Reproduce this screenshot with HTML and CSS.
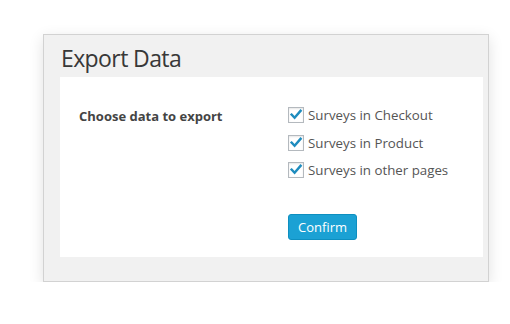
FILE: index.html
```html
<!DOCTYPE html>
<html>
<head>
<meta charset="utf-8">
<link rel="stylesheet" href="styles.css">
</head>
<body>
<div class="panel">
  <h1 class="title">Export Data</h1>
  <div class="card">
    <div class="label">Choose data to export</div>
    <div class="options">
      <div class="option"><span class="box"><svg viewBox="0 0 16 16" width="16" height="16"><path d="M3.6 7.6 L6.6 10.8 L12.6 3.8" fill="none" stroke="#1e8cbe" stroke-width="2.4" stroke-linecap="square"/></svg></span><span>Surveys in Checkout</span></div>
      <div class="option"><span class="box"><svg viewBox="0 0 16 16" width="16" height="16"><path d="M3.6 7.6 L6.6 10.8 L12.6 3.8" fill="none" stroke="#1e8cbe" stroke-width="2.4" stroke-linecap="square"/></svg></span><span>Surveys in Product</span></div>
      <div class="option"><span class="box"><svg viewBox="0 0 16 16" width="16" height="16"><path d="M3.6 7.6 L6.6 10.8 L12.6 3.8" fill="none" stroke="#1e8cbe" stroke-width="2.4" stroke-linecap="square"/></svg></span><span>Surveys in other pages</span></div>
      <button class="confirm">Confirm</button>
    </div>
  </div>
</div>
</body>
</html>
```
FILE: styles.css
```css
html, body {
  margin: 0;
  padding: 0;
  background: #ffffff;
}
body {
  font-family: "Open Sans", "Liberation Sans", sans-serif;
  padding: 34px 0 0 43px;
}
.panel {
  width: 444px;
  border: 1px solid #d2d2d2;
  background: #f1f1f1;
  box-shadow: 0 4px 14px rgba(0, 0, 0, 0.12);
  padding-bottom: 24px;
}
.title {
  margin: 0;
  padding: 7px 0 3px 17px;
  font-size: 23px;
  letter-spacing: -0.6px;
  line-height: 32px;
  font-weight: 400;
  color: #383838;
}
.card {
  margin: 0 5px 0 16px;
  background: #ffffff;
  display: flex;
  padding: 28px 0 17px 19px;
  height: 135px;
}
.label {
  width: 209px;
  font-size: 13px;
  font-weight: 700;
  color: #444444;
  line-height: 20px;
  margin-top: 1px;
}
.options {
  display: flex;
  flex-direction: column;
  align-items: flex-start;
  gap: 7.5px;
}
.option {
  display: flex;
  align-items: center;
  gap: 4px;
  height: 20px;
  font-size: 13.3px;
  color: #555555;
}
.box {
  width: 14px;
  height: 14px;
  border: 1px solid #b4b9be;
  background: #fff;
  box-shadow: inset 0 1px 2px rgba(0,0,0,0.1);
  position: relative;
  display: block;
}
.box svg {
  position: absolute;
  left: -1px;
  top: -1px;
}
.confirm {
  margin-top: 26.5px;
  height: 26px;
  padding: 0 9px;
  border: 1px solid #0e8fc0;
  border-radius: 3px;
  background: #1ba1d4;
  color: #ffffff;
  font-family: "Open Sans", "Liberation Sans", sans-serif;
  font-size: 13px;
  line-height: 24px;
}
```
